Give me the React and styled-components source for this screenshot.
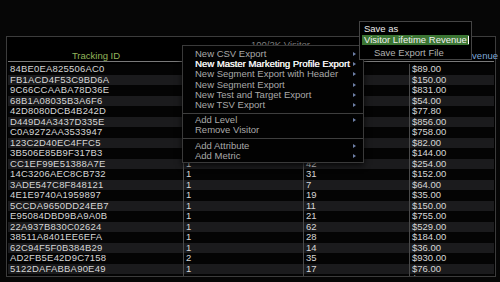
import React from "react";
import styled, { createGlobalStyle } from "styled-components";

// rows 1-9: visits and page views sit under the context menu
const rows = [
  ["84BE0EA825506AC0", "", "", "$89.00"],
  ["FB1ACD4F53C9BD6A", "", "", "$150.00"],
  ["9C66CCAABA78D36E", "", "", "$831.00"],
  ["68B1A08035B3A6F6", "", "", "$54.00"],
  ["42D8080DCB4B242D", "", "", "$77.80"],
  ["D449D4A3437D335E", "", "", "$856.00"],
  ["C0A9272AA3533947", "", "", "$758.00"],
  ["123C2D40EC4FFC5", "", "", "$82.00"],
  ["3B506E85B9F317B3", "", "", "$144.00"],
  ["CC1EF99E51388A7E", "1", "42", "$254.00"],
  ["14C3206AEC8CB732", "1", "31", "$152.00"],
  ["3ADE547C8F848121", "1", "7", "$64.00"],
  ["4E1E9740A1959897", "1", "19", "$35.00"],
  ["5CCDA9650DD24EB7", "1", "11", "$150.00"],
  ["E95084DBD9BA9A0B", "1", "21", "$755.00"],
  ["22A937B830C02624", "1", "62", "$529.00"],
  ["38511A8401EE6EFA", "1", "28", "$184.00"],
  ["62C94F5F0B384B29", "1", "14", "$36.00"],
  ["AD2FB5E42D9C7158", "2", "35", "$930.00"],
  ["5122DAFABBA90E49", "1", "17", "$76.00"],
  ["DA7E9A0BDC97A1F2", "1", "16", "$66.00"],
];

const menu = [
  [
    { label: "New CSV Export", sub: true },
    { label: "New Master Marketing Profile Export", sub: true, hot: true },
    { label: "New Segment Export with Header", sub: true },
    { label: "New Segment Export", sub: true },
    { label: "New Test and Target Export", sub: true },
    { label: "New TSV Export", sub: true },
  ],
  [
    { label: "Add Level", sub: true },
    { label: "Remove Visitor" },
  ],
  [
    { label: "Add Attribute", sub: true },
    { label: "Add Metric", sub: true },
  ],
];

export default function App() {
  return (
    <Page>
      <GlobalStyle />
      <Panel>
        <TitleRow>100/2K Visitor</TitleRow>
        <HeaderRow>
          <HeadCell>Tracking ID</HeadCell>
          <HeadCell />
          <HeadCell />
          <HeadCell $blue $right>Lifetime Revenue</HeadCell>
        </HeaderRow>
        <Body>
          {rows.map((r, i) => (
            <Row key={i} $alt={i % 2 === 1}>
              {r.map((c, j) => (
                <Cell key={j} $id={j === 0}>{c}</Cell>
              ))}
            </Row>
          ))}
        </Body>

        <Menu>
          {menu.map((group, gi) => (
            <Group key={gi} $index={gi}>
              {group.map((item) => (
                <Item key={item.label} $hot={item.hot}>
                  <span>{item.label}</span>
                  {item.sub && <Arrow />}
                </Item>
              ))}
            </Group>
          ))}
        </Menu>

        <SaveBox>
          <SaveLabel>Save as</SaveLabel>
          <SaveInput>
            Visitor Lifetime Revenue<Caret />
          </SaveInput>
          <SaveButton>Save Export File</SaveButton>
        </SaveBox>
      </Panel>
    </Page>
  );
}

const GlobalStyle = createGlobalStyle`
  html, body {
    margin: 0;
    background: #060606;
  }
  body {
    font-family: "Liberation Sans", Arial, sans-serif;
  }
`;

const Page = styled.div`
  width: 500px;
  height: 282px;
  overflow: hidden;
  padding: 36px 4px 0 6px;
  box-sizing: border-box;
`;

const Panel = styled.div`
  position: relative;
  height: 241px;
  border: 1px solid #3c3c3c;
  background: #000;
  padding: 0 1px;
  box-sizing: border-box;
  display: flex;
  flex-direction: column;
`;

const TitleRow = styled.div`
  height: 13px;
  padding: 2px 0 0 243px;
  box-sizing: border-box;
  font-size: 9.5px;
  color: #8a8a8a;
  line-height: 11px;
`;

const cols = "176px 120px 106px 1fr";

const HeaderRow = styled.div`
  display: grid;
  grid-template-columns: ${cols};
  height: 11px;
  border-bottom: 1px solid #7a7a7a;
`;

const HeadCell = styled.div`
  font-size: 9.5px;
  line-height: 11px;
  color: ${(p) => (p.$blue ? "#7ea8d8" : "#93b55a")};
  text-align: ${(p) => (p.$right ? "right" : "center")};
  white-space: nowrap;
  margin-right: ${(p) => (p.$right ? "-4px" : "0")};
`;

const Body = styled.div`
  flex: 1;
  overflow: hidden;
  padding-top: 2px;
`;

const Row = styled.div`
  display: grid;
  grid-template-columns: ${cols};
  height: 10.5px;
  background: ${(p) => (p.$alt ? "#1b1b1d" : "#040404")};
`;

const Cell = styled.div`
  font-size: 9.5px;
  line-height: 10.5px;
  letter-spacing: ${(p) => (p.$id ? "0.2px" : "0")};
  color: #d6d6d6;
  padding-left: 2px;
  border-right: 1px solid #4a4a4a;
  white-space: nowrap;
  overflow: hidden;

  &:last-child {
    border-right: none;
  }
`;

const Menu = styled.div`
  position: absolute;
  left: 175px;
  top: 8px;
  width: 180px;
  background: #020202;
  border: 1px solid #3a3a3a;
  box-shadow: 0 2px 6px rgba(0, 0, 0, 0.8);
  padding: 3px 0 1px;
`;

const groupPadding = ["0 0 3px", "1px 0 2px", "2px 0 0"];

const Group = styled.div`
  border-top: ${(p) => (p.$index === 0 ? "none" : "1px solid #3e3e3e")};
  padding: ${(p) => groupPadding[p.$index]};
`;

const Item = styled.div`
  display: flex;
  justify-content: space-between;
  align-items: center;
  height: 10.2px;
  padding: 0 7px 0 12px;
  font-size: 9.5px;
  line-height: 10.2px;
  color: ${(p) => (p.$hot ? "#f4f4f4" : "#a9a9a9")};
  text-shadow: ${(p) => (p.$hot ? "0.35px 0 0 #f4f4f4" : "none")};
  white-space: nowrap;
`;

const Arrow = styled.i`
  width: 0;
  height: 0;
  border-top: 2.5px solid transparent;
  border-bottom: 2.5px solid transparent;
  border-left: 3px solid #6d7fa6;
`;

const SaveBox = styled.div`
  position: absolute;
  left: 352px;
  top: -16px;
  width: 113px;
  height: 39px;
  background: #000;
  border: 1px solid #444;
  box-sizing: border-box;
  padding: 2px 2px 0 2px;
  display: flex;
  flex-direction: column;
`;

const SaveLabel = styled.div`
  font-size: 9.5px;
  line-height: 10px;
  color: #ececec;
  padding-left: 2px;
`;

const SaveInput = styled.div`
  margin-top: 1px;
  height: 10px;
  background: #3b7533;
  color: #f0f0f0;
  font-size: 9.5px;
  line-height: 10px;
  padding-left: 2px;
  white-space: nowrap;
  display: flex;
  align-items: center;
`;

const Caret = styled.span`
  display: inline-block;
  width: 1px;
  height: 8px;
  background: #fff;
  margin-left: 1px;
`;

const SaveButton = styled.div`
  margin-top: 3px;
  font-size: 9.5px;
  line-height: 10px;
  color: #b0b0b0;
  padding-left: 12px;
`;
